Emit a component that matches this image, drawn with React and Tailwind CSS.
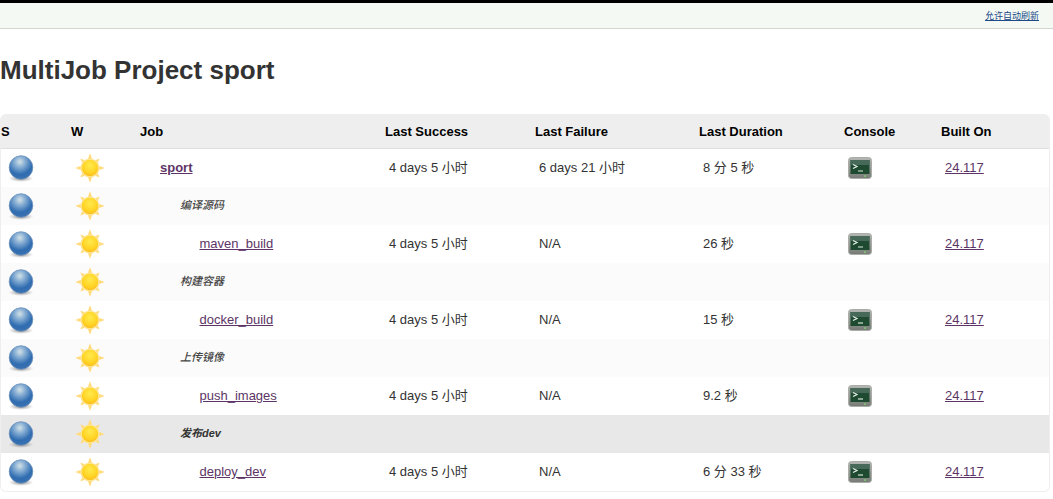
const SANS = "font-['Liberation_Sans','Noto_Sans_CJK_SC',sans-serif]"

const COLS = 'grid grid-cols-[70px_69px_245px_150px_164px_145px_97px_1fr]'

const ROWS = [
  { kind: 'job', name: 'sport', success: '4 days 5 小时', failure: '6 days 21 小时', duration: '8 分 5 秒', top: true },
  { kind: 'phase', name: '编译源码' },
  { kind: 'job', name: 'maven_build', success: '4 days 5 小时', failure: 'N/A', duration: '26 秒' },
  { kind: 'phase', name: '构建容器' },
  { kind: 'job', name: 'docker_build', success: '4 days 5 小时', failure: 'N/A', duration: '15 秒' },
  { kind: 'phase', name: '上传镜像' },
  { kind: 'job', name: 'push_images', success: '4 days 5 小时', failure: 'N/A', duration: '9.2 秒' },
  { kind: 'phase', name: '发布dev', hover: true },
  { kind: 'job', name: 'deploy_dev', success: '4 days 5 小时', failure: 'N/A', duration: '6 分 33 秒' },
]

function Ball({ id }) {
  return (
    <svg width="28" height="28" viewBox="0 0 28 28" className="block">
      <defs>
        <radialGradient id={`ball-${id}`} cx="0.45" cy="0.26" r="0.74">
          <stop offset="0" stopColor="#d3e2e6" />
          <stop offset="0.32" stopColor="#84acd3" />
          <stop offset="0.72" stopColor="#2f6cb0" />
          <stop offset="1" stopColor="#3c72b0" />
        </radialGradient>
        <radialGradient id={`shadow-${id}`}>
          <stop offset="0" stopColor="#555" stopOpacity="0.75" />
          <stop offset="1" stopColor="#888" stopOpacity="0" />
        </radialGradient>
      </defs>
      <ellipse cx="13" cy="23.5" rx="12.5" ry="3.5" fill={`url(#shadow-${id})`} />
      <circle cx="13" cy="12.5" r="11.8" fill={`url(#ball-${id})`} stroke="#6f93bd" strokeWidth="0.8" />
    </svg>
  )
}

function Sun({ id }) {
  const rays = [0, 45, 90, 135, 180, 225, 270, 315]
  return (
    <svg width="30" height="30" viewBox="0 0 30 30" className="block">
      <defs>
        <radialGradient id={`sun-${id}`} cx="0.5" cy="0.35" r="0.65">
          <stop offset="0" stopColor="#ffea4d" />
          <stop offset="0.7" stopColor="#ffd324" />
          <stop offset="1" stopColor="#fcbc1d" />
        </radialGradient>
      </defs>
      {rays.map((a) => (
        <polygon key={a} points={a % 90 === 0 ? '12.4,7 15,0.2 17.6,7' : '12.6,7 15,1.4 17.4,7'} fill="#ffdb7d" transform={`rotate(${a} 15 15)`} />
      ))}
      <circle cx="15" cy="15" r="9.6" fill="#ffe596" />
      <circle cx="15" cy="15" r="8.2" fill={`url(#sun-${id})`} />
    </svg>
  )
}

function Terminal() {
  return (
    <svg width="24" height="22" viewBox="0 0 24 22" className="block">
      <defs>
        <linearGradient id="frame" x1="0" y1="0" x2="0" y2="1">
          <stop offset="0" stopColor="#b5b8b2" />
          <stop offset="1" stopColor="#777b75" />
        </linearGradient>
      </defs>
      <rect x="0.5" y="0.5" width="23" height="21" rx="3" fill="url(#frame)" stroke="#a9aca7" />
      <rect x="2.5" y="3" width="19" height="14" fill="#1f4a32" />
      <rect x="2.5" y="3" width="19" height="5" fill="#47695a" />
      <path d="M5 7.5 L9 9.5 L5 11.5" fill="none" stroke="#e6f0e6" strokeWidth="1.2" />
      <path d="M10 14 H15" stroke="#d5e5d5" strokeWidth="1.2" />
      <rect x="16" y="18.5" width="2" height="1.2" fill="#7ddc6a" />
    </svg>
  )
}

const link = 'text-[#5c3566] underline'

function JobRow({ row, index }) {
  const bg = row.hover ? 'bg-[#e8e8e8]' : row.kind === 'phase' ? 'bg-[#fbfbfb]' : 'bg-white'
  return (
    <div className={`${COLS} h-[38px] items-center text-[13px] text-[#333] ${bg}`}>
      <div className="pl-[7px] pt-[1px]"><Ball id={index} /></div>
      <div className="pl-[4px]"><Sun id={index} /></div>
      {row.kind === 'phase' ? (
        <div className={`pl-[40px] pb-[1px] text-[11px] italic ${row.hover ? 'font-bold' : 'font-medium text-[#444]'}`}>{row.name}</div>
      ) : row.top ? (
        <div className="pl-[20px]"><a className={`${link} font-bold`}>{row.name}</a></div>
      ) : (
        <div className="pl-[59.5px]"><a className={link}>{row.name}</a></div>
      )}
      <div className="pl-[4px]">{row.success}</div>
      <div className="pl-[4px]">{row.failure}</div>
      <div className="pl-[4px]">{row.duration}</div>
      <div className="pl-[4px]">{row.kind === 'job' && <Terminal />}</div>
      <div className="pl-[4px]">{row.kind === 'job' && <a className={link}>24.117</a>}</div>
    </div>
  )
}

export default function App() {
  return (
    <div className={`${SANS} bg-white h-[499px] overflow-hidden`}>
      {/* Top bar */}
      <div className="h-[29px] border-t-[3px] border-b border-t-black border-b-[#d3d7cf] bg-[#f4f9f4] flex items-center justify-end pr-[14px] pt-[3px]">
        <a className="text-[9px] text-[#204a87] underline">允许自动刷新</a>
      </div>

      <h1 className="text-[26px] leading-[30px] font-bold text-[#333] mt-[26px]">MultiJob Project sport</h1>

      {/* Table */}
      <div className="mt-[29px] w-[1050px] rounded-[6px] border-b border-x border-[#eeeeee] overflow-hidden">
        <div className={`${COLS} h-[35px] items-center bg-[#eeeeee] border-b border-[#dedede] pt-[2px] text-[13px] font-bold text-black`}>
          <div>S</div>
          <div>W</div>
          <div>Job</div>
          <div>Last Success</div>
          <div>Last Failure</div>
          <div>Last Duration</div>
          <div>Console</div>
          <div>Built On</div>
        </div>
        {ROWS.map((row, i) => (
          <JobRow key={row.name} row={row} index={i} />
        ))}
      </div>
    </div>
  )
}
